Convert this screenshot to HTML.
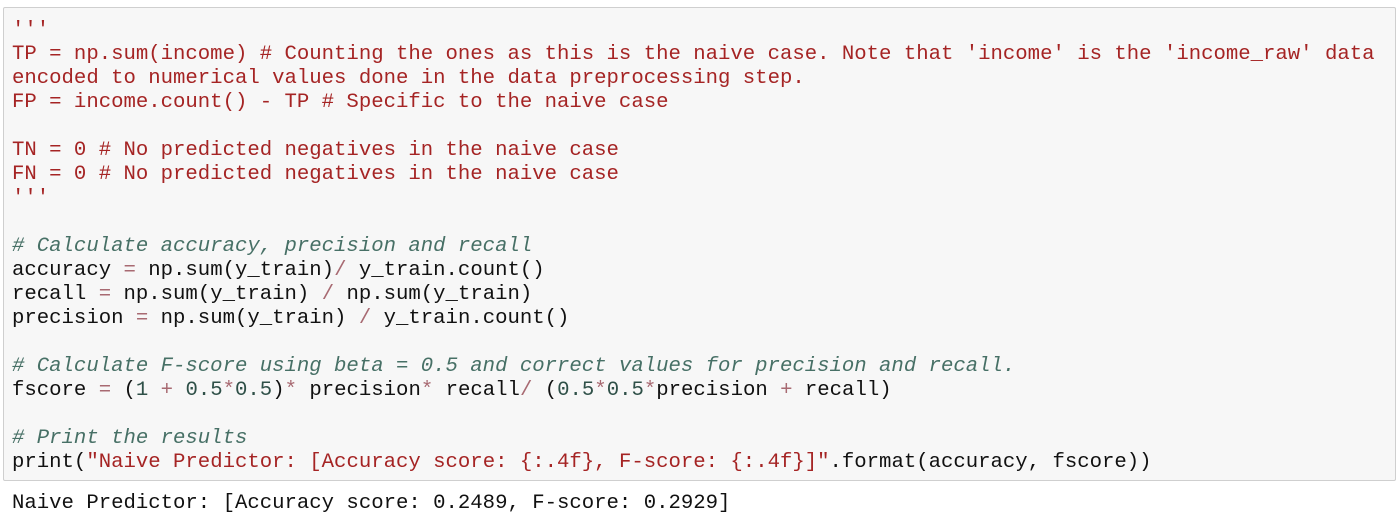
<!DOCTYPE html>
<html><head><style>
html,body{margin:0;padding:0;background:#fff;width:1400px;height:528px;overflow:hidden}
.box{position:absolute;left:3px;top:7px;width:1391px;height:472px;background:#f7f7f7;border:1px solid #cfcfcf;border-radius:2px}
pre{margin:0;font-family:"Liberation Mono",monospace;font-size:20.65px;line-height:24px;color:#111;white-space:pre}
.code{position:absolute;left:12px;top:19px}
.out{position:absolute;left:12px;top:492px}
.s{color:#a52424}.c{color:#477066;font-style:italic}.o{color:#a86a72}.n{color:#2f5048}
</style></head><body>
<div class="box"></div>
<pre class="code"><span class="s">'''
TP = np.sum(income) # Counting the ones as this is the naive case. Note that 'income' is the 'income_raw' data
encoded to numerical values done in the data preprocessing step.
FP = income.count() - TP # Specific to the naive case

TN = 0 # No predicted negatives in the naive case
FN = 0 # No predicted negatives in the naive case
'''</span>

<span class="c"># Calculate accuracy, precision and recall</span>
accuracy <span class="o">=</span> np.sum(y_train)<span class="o">/</span> y_train.count()
recall <span class="o">=</span> np.sum(y_train) <span class="o">/</span> np.sum(y_train)
precision <span class="o">=</span> np.sum(y_train) <span class="o">/</span> y_train.count()

<span class="c"># Calculate F-score using beta = 0.5 and correct values for precision and recall.</span>
fscore <span class="o">=</span> (<span class="n">1</span> <span class="o">+</span> <span class="n">0.5</span><span class="o">*</span><span class="n">0.5</span>)<span class="o">*</span> precision<span class="o">*</span> recall<span class="o">/</span> (<span class="n">0.5</span><span class="o">*</span><span class="n">0.5</span><span class="o">*</span>precision <span class="o">+</span> recall)

<span class="c"># Print the results</span>
print(<span class="s">"Naive Predictor: [Accuracy score: {:.4f}, F-score: {:.4f}]"</span>.format(accuracy, fscore))</pre>
<pre class="out">Naive Predictor: [Accuracy score: 0.2489, F-score: 0.2929]</pre>
</body></html>
